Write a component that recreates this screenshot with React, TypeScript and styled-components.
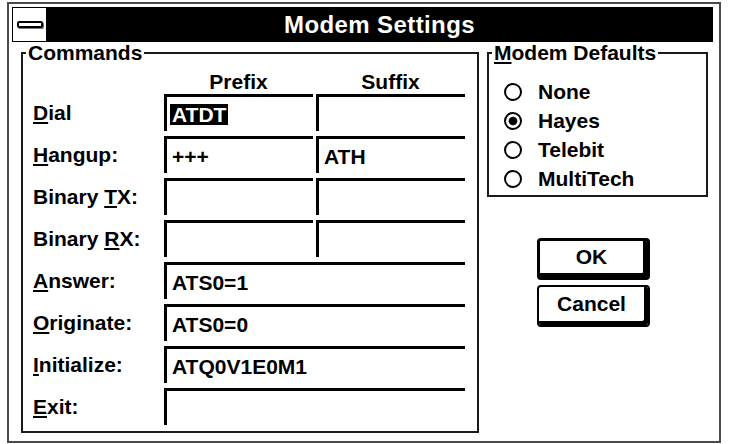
import React from 'react';
import styled, { createGlobalStyle } from 'styled-components';

const GlobalStyle = createGlobalStyle`
	html, body {
		margin: 0;
		padding: 0;
		background: #fff;
	}
	body {
		width: 730px;
		height: 444px;
		overflow: hidden;
		font-family: "Liberation Sans", Arial, sans-serif;
		color: #000;
	}
`;

const Screen = styled.div`
	width: 730px;
	height: 444px;
	box-sizing: border-box;
	padding: 2px 0 0 7px;
	background: #fff;
`;

const Window = styled.div`
	box-sizing: border-box;
	width: 714px;
	height: 441px;
	border: 2px solid #4a4a4a;
	padding: 3px 6px 8px 3px;
	display: flex;
	flex-direction: column;
	background: #fff;
`;

const TitleBar = styled.div`
	display: flex;
	height: 35px;
	box-sizing: border-box;
	border: 1px solid #000;
	background: #000;
`;

const SystemMenu = styled.div`
	width: 34px;
	box-sizing: border-box;
	background: #fff;
	border-right: 1px solid #000;
	display: flex;
	align-items: center;
	justify-content: center;
`;

const SystemBar = styled.span`
	width: 26px;
	height: 7px;
	box-sizing: border-box;
	border: 2px solid #000;
	border-radius: 2px;
	background: #fff;
	box-shadow: 1px 1px 0 #777;
`;

const Title = styled.h1`
	flex: 1;
	margin: 0;
	color: #fff;
	font-size: 24px;
	font-weight: 700;
	letter-spacing: 0.4px;
	line-height: 33px;
	text-align: center;
`;

const Body = styled.div`
	flex: 1;
	display: flex;
	gap: 8px;
	padding-left: 9px;
`;

const GroupBox = styled.fieldset`
	margin: 0;
	padding: 0;
	min-inline-size: 0;
	box-sizing: border-box;
	border: 2px solid #1a1a1a;
`;

const Legend = styled.legend`
	margin-left: 3px;
	padding: 0 2px;
	font-size: 21px;
	font-weight: 700;
	line-height: 22px;
`;

const Commands = styled(GroupBox)`
	width: 458px;
`;

const CommandGrid = styled.div`
	display: grid;
	grid-template-columns: 128px 149px 149px;
	grid-template-rows: 25px repeat(8, 37px);
	column-gap: 3px;
	row-gap: 5px;
	padding-left: 10px;
	align-items: center;
`;

const ColumnHead = styled.div<{ $col: number }>`
	grid-column: ${p => p.$col};
	align-self: end;
	text-align: center;
	font-size: 21px;
	font-weight: 700;
	line-height: 14px;
`;

const FieldLabel = styled.div`
	grid-column: 1;
	font-size: 21px;
	font-weight: 700;
	white-space: nowrap;
`;

const Key = styled.span`
	text-decoration: underline;
	text-decoration-thickness: 2px;
	text-underline-offset: 2px;
`;

const EditBox = styled.div<{ $wide?: boolean }>`
	grid-column: ${p => (p.$wide ? '2 / 4' : 'auto')};
	height: 37px;
	box-sizing: border-box;
	border-top: 3px solid #000;
	border-left: 3px solid #000;
	padding-left: 3px;
	display: flex;
	align-items: center;
	font-size: 21px;
	font-weight: 700;
`;

const EditText = styled.span<{ $selected?: boolean }>`
	padding: 0 2px;
	line-height: 21px;
	background: ${p => (p.$selected ? '#000' : 'transparent')};
	color: ${p => (p.$selected ? '#fff' : '#000')};
`;

const SideColumn = styled.div`
	width: 221px;
	display: flex;
	flex-direction: column;
`;

const Defaults = styled(GroupBox)`
	height: 155px;
`;

const RadioList = styled.div`
	display: flex;
	flex-direction: column;
	padding: 13px 0 0 15px;
`;

const RadioRow = styled.label`
	display: flex;
	align-items: center;
	gap: 16px;
	height: 29px;
	font-size: 21px;
	font-weight: 700;
`;

const RadioMark = styled.span<{ $checked?: boolean }>`
	flex: none;
	display: block;
	width: 18px;
	height: 18px;
	box-sizing: border-box;
	border: 2.5px solid #000;
	border-radius: 50%;
	background: ${p =>
		p.$checked ? 'radial-gradient(circle, #000 0 3.6px, #666 4.2px, transparent 4.8px)' : '#fff'};
`;

const ButtonStack = styled.div`
	display: flex;
	flex-direction: column;
	gap: 5px;
	margin-top: 41px;
	padding-left: 50px;
`;

const PushButton = styled.button<{ $default?: boolean }>`
	width: 113px;
	height: 42px;
	box-sizing: border-box;
	border: ${p => (p.$default ? 3 : 2)}px solid #000;
	border-radius: 4px;
	background: #fff;
	box-shadow: inset -4px -4px 0 #000;
	padding: 0 4px 4px 0;
	font-family: "Liberation Sans", Arial, sans-serif;
	font-size: 21px;
	font-weight: 700;
	color: #000;
`;

type Command = {
	pre: string;
	key: string;
	rest: string;
	prefix?: string;
	suffix?: string;
	value?: string;
	wide?: boolean;
	selected?: boolean;
};

const commands: Command[] = [
	{ pre: '', key: 'D', rest: 'ial', prefix: 'ATDT', suffix: '', selected: true },
	{ pre: '', key: 'H', rest: 'angup:', prefix: '+++', suffix: 'ATH' },
	{ pre: 'Binary ', key: 'T', rest: 'X:', prefix: '', suffix: '' },
	{ pre: 'Binary ', key: 'R', rest: 'X:', prefix: '', suffix: '' },
	{ pre: '', key: 'A', rest: 'nswer:', value: 'ATS0=1', wide: true },
	{ pre: '', key: 'O', rest: 'riginate:', value: 'ATS0=0', wide: true },
	{ pre: '', key: 'I', rest: 'nitialize:', value: 'ATQ0V1E0M1', wide: true },
	{ pre: '', key: 'E', rest: 'xit:', value: '', wide: true },
];

const modems = ['None', 'Hayes', 'Telebit', 'MultiTech'];

export default function App() {
	return (
		<>
			<GlobalStyle />
			<Screen>
				<Window>
					<TitleBar>
						<SystemMenu>
							<SystemBar />
						</SystemMenu>
						<Title>Modem Settings</Title>
					</TitleBar>
					<Body>
						<Commands>
							<Legend>Commands</Legend>
							<CommandGrid>
								<ColumnHead $col={2}>Prefix</ColumnHead>
								<ColumnHead $col={3}>Suffix</ColumnHead>
								{commands.map(c => (
									<React.Fragment key={c.pre + c.key + c.rest}>
										<FieldLabel>
											{c.pre}
											<Key>{c.key}</Key>
											{c.rest}
										</FieldLabel>
										{c.wide ? (
											<EditBox $wide>{c.value && <EditText>{c.value}</EditText>}</EditBox>
										) : (
											<>
												<EditBox>
													{c.prefix && <EditText $selected={c.selected}>{c.prefix}</EditText>}
												</EditBox>
												<EditBox>{c.suffix && <EditText>{c.suffix}</EditText>}</EditBox>
											</>
										)}
									</React.Fragment>
								))}
							</CommandGrid>
						</Commands>
						<SideColumn>
							<Defaults>
								<Legend>
									<Key>M</Key>odem Defaults
								</Legend>
								<RadioList>
									{modems.map(m => (
										<RadioRow key={m}>
											<RadioMark $checked={m === 'Hayes'} />
											{m}
										</RadioRow>
									))}
								</RadioList>
							</Defaults>
							<ButtonStack>
								<PushButton $default>OK</PushButton>
								<PushButton>Cancel</PushButton>
							</ButtonStack>
						</SideColumn>
					</Body>
				</Window>
			</Screen>
		</>
	);
}
